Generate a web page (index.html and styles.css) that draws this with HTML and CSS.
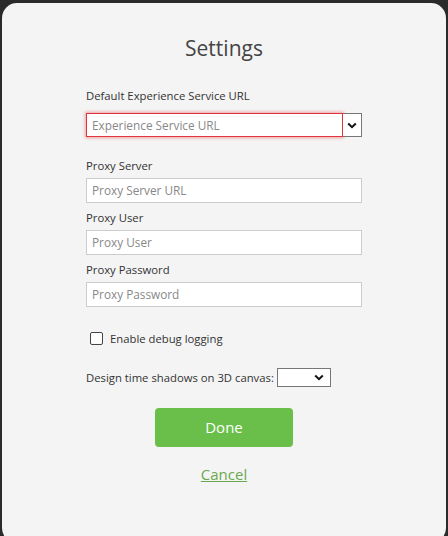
FILE: index.html
```html
<!DOCTYPE html>
<html>
<head>
<meta charset="utf-8">
<link rel="stylesheet" href="styles.css">
</head>
<body>
<div class="dialog">
  <h1 class="title">Settings</h1>
  <div class="form">
    <label class="label first">Default Experience Service URL</label>
    <div class="combo">
      <div class="input invalid">Experience Service URL</div>
      <div class="drop">
        <svg width="10" height="7" viewBox="0 0 10 7"><path d="M1.2 1.5 L5 5.2 L8.8 1.5" fill="none" stroke="#111" stroke-width="2"/></svg>
      </div>
    </div>
    <label class="label section">Proxy Server</label>
    <div class="input">Proxy Server URL</div>
    <label class="label">Proxy User</label>
    <div class="input">Proxy User</div>
    <label class="label">Proxy Password</label>
    <div class="input">Proxy Password</div>
    <div class="check-row">
      <span class="checkbox"></span>
      <span class="check-text">Enable debug logging</span>
    </div>
    <div class="shadow-row">
      <span>Design time shadows on 3D canvas:</span>
      <div class="mini-select">
        <svg width="10" height="7" viewBox="0 0 10 7"><path d="M1.2 1.5 L5 5.2 L8.8 1.5" fill="none" stroke="#111" stroke-width="2"/></svg>
      </div>
    </div>
  </div>
  <div class="actions">
    <div class="done">Done</div>
    <a class="cancel" href="#">Cancel</a>
  </div>
</div>
</body>
</html>
```
FILE: styles.css
```css
html, body {
  margin: 0;
  padding: 0;
  background: #2a2a2a;
  height: 536px;
  overflow: hidden;
}
body {
  font-family: "Open Sans", "Noto Sans", sans-serif;
  color: #333;
}
.dialog {
  margin: 3px 2px 0 2px;
  height: 540px;
  background: #f4f4f4;
  border-radius: 15px;
  padding-top: 31px;
  box-sizing: border-box;
}
.title {
  margin: 0;
  text-align: center;
  font-weight: 400;
  font-size: 21px;
  line-height: 28px;
  color: #444;
}
.form {
  margin: 0 0 0 84px;
  width: 276px;
  display: flex;
  flex-direction: column;
}
.label {
  display: block;
  font-size: 11.3px;
  line-height: 16px;
  color: #333;
  margin: 7px 0 4px 0;
}
.label.first {
  margin: 26px 0 9px 0;
}
.label.section {
  margin-top: 21px;
}
.combo {
  display: flex;
  align-items: flex-start;
}
.input {
  box-sizing: border-box;
  height: 25px;
  border: 1px solid #ccc;
  background: #fff;
  font-size: 11.8px;
  line-height: 23px;
  padding-left: 5px;
  color: #888;
}
.input.invalid {
  flex: 1;
  height: 24px;
  line-height: 22px;
  border: 1px solid #e0353b;
  box-shadow: 0 0 3px 1px rgba(230, 40, 50, 0.4);
}
.drop {
  width: 19px;
  height: 24px;
  box-sizing: border-box;
  border: 1px solid #777;
  border-left: none;
  background: #fff;
  display: flex;
  align-items: center;
  justify-content: center;
}
.check-row {
  display: flex;
  align-items: center;
  margin-top: 24px;
  margin-left: 4px;
  height: 14px;
}
.checkbox {
  width: 11px;
  height: 11px;
  border: 1px solid #444;
  border-radius: 2px;
  background: #fff;
}
.check-text {
  margin-left: 7px;
  font-size: 11.3px;
  color: #333;
}
.shadow-row {
  display: flex;
  align-items: center;
  margin-top: 23px;
  font-size: 11.3px;
  color: #333;
}
.mini-select {
  margin-left: 3px;
  width: 54px;
  height: 19px;
  box-sizing: border-box;
  border: 1px solid #777;
  background: #fff;
  display: flex;
  align-items: center;
  justify-content: flex-end;
  padding-right: 6px;
}
.actions {
  display: flex;
  flex-direction: column;
  align-items: center;
  margin-top: 21px;
}
.done {
  width: 138px;
  height: 39px;
  background: #6abf4b;
  border-radius: 4px;
  color: #fff;
  font-size: 15px;
  line-height: 39px;
  text-align: center;
}
.cancel {
  margin-top: 17px;
  color: #6aa84f;
  font-size: 15px;
  line-height: 20px;
  text-decoration: underline;
}
```
